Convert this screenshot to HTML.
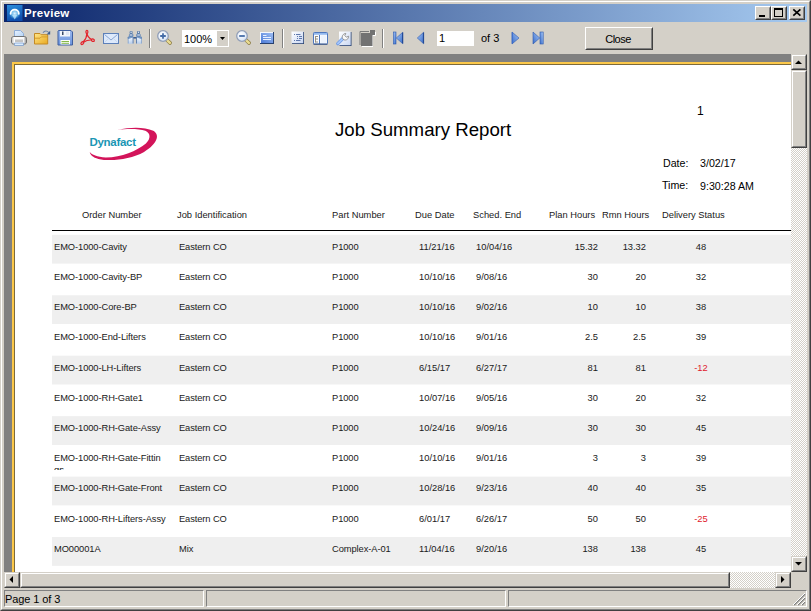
<!DOCTYPE html>
<html><head><meta charset="utf-8"><title>Preview</title>
<style>
*{box-sizing:border-box;margin:0;padding:0}
html,body{width:811px;height:611px;overflow:hidden;background:#d4d0c8}
body{position:relative;font-family:"Liberation Sans",sans-serif;font-size:11px;color:#000}
.abs,.abs *{position:absolute}
#win{left:0;top:0;width:811px;height:611px;background:#d4d0c8;
 border:1px solid;border-color:#d4d0c8 #404040 #404040 #d4d0c8}
#win2{left:0;top:0;width:809px;height:609px;border:1px solid;border-color:#fff #808080 #808080 #fff}
#title{left:4px;top:4px;width:803px;height:18px;background:linear-gradient(90deg,#0a246a 0%,#a6caf0 100%)}
#title .txt{left:20px;top:1px;color:#fff;font-weight:bold;font-size:11.5px;letter-spacing:0.3px;line-height:16px;white-space:nowrap}
.cap{top:2px;width:16px;height:14px;background:#d4d0c8;border:1px solid;border-color:#fff #404040 #404040 #fff}
.cap:before{content:"";position:absolute;left:0;top:0;right:0;bottom:0;border:1px solid;border-color:#d4d0c8 #808080 #808080 #d4d0c8}
#doc{left:4px;top:54px;width:787px;height:518px;background:#808080;overflow:hidden}
#page{left:8px;top:8px;width:900px;height:900px;background:#fff;border:2px solid #fcc84a}
#pin{left:0;top:0;width:896px;height:896px;border:1px solid #7d6a3a;border-right:0;border-bottom:0}
.track{background:#e9e7e3;background-image:repeating-conic-gradient(#fff 0 25%,#d4d0c8 0 50%);background-size:2px 2px}
.btn{background:#d4d0c8;border:1px solid;border-color:#d4d0c8 #404040 #404040 #d4d0c8}
.btn:before{content:"";position:absolute;left:0;top:0;right:0;bottom:0;border:1px solid;border-color:#fff #808080 #808080 #fff}
.pbtn{background:#d4d0c8;border:1px solid;border-color:#fff #404040 #404040 #fff}
.pbtn:before{content:"";position:absolute;left:0;top:0;right:0;bottom:0;border:1px solid;border-color:#d4d0c8 #808080 #808080 #d4d0c8}
.sunk{border:1px solid;border-color:#808080 #fff #fff #808080}
.sep{top:29px;width:2px;height:19px;border-left:1px solid #808080;border-right:1px solid #fff}
.r{font-size:9.33px;line-height:11px;white-space:nowrap}
.h{font-size:9.33px;line-height:11px;white-space:nowrap;top:210px;color:#1a1a1a}
.band{left:52px;width:740px;background:#efefef}
.row{left:0;width:800px;height:30px}
.row span{font-size:9.33px;line-height:11px;white-space:nowrap;top:0;color:#1a1a1a}
.c1{left:54px;letter-spacing:-0.08px}.c2{left:179px;letter-spacing:-0.1px}.c3{left:332px;letter-spacing:-0.08px}.c4{left:419px}.c5{left:476px}
.c6{left:540px;width:58px;text-align:right}.c7{left:588px;width:58px;text-align:right}.c8{left:671px;width:60px;text-align:center}
.row span.neg{color:#e0182c}
</style></head><body>
<div class="abs" id="win"><div id="win2"></div></div>
<div class="abs" id="title">
 <svg style="left:3px;top:1px" width="16" height="16" viewBox="0 0 16 16"><defs><linearGradient id="ig" x1="0" y1="0" x2="0.300" y2="1"><stop offset="0" stop-color="#2b8fdb"/><stop offset="1" stop-color="#0f4fae"/></linearGradient><radialGradient id="ir" cx="0.5" cy="0.5" r="0.5"><stop offset="0" stop-color="#dff3ff"/><stop offset="0.55" stop-color="#7cc8f2" stop-opacity=".8"/><stop offset="1" stop-color="#3aa0e0" stop-opacity="0"/></radialGradient></defs><rect width="15.500" height="16" fill="url(#ig)"/><circle cx="7.700" cy="8.500" r="5.800" fill="url(#ir)"/><path d="M3.600 8.800a4.100 4.100 0 0 1 8.200 0" fill="none" stroke="#fff" stroke-width="1.800" stroke-linecap="round"/><path d="M5.200 10L7.700 14.500L10.200 10z" fill="#bfe6fb" opacity=".75"/></svg>
 <div class="txt">Preview</div>
 <div class="cap" style="left:751px"><svg width="14" height="12" style="left:0;top:0"><rect x="3" y="8" width="6" height="2" fill="#000"/></svg></div>
 <div class="cap" style="left:767px"><svg width="14" height="12" style="left:0;top:0"><rect x="2.500" y="1.500" width="8" height="8" fill="none" stroke="#000"/><rect x="2" y="1" width="9" height="2" fill="#000"/></svg></div>
 <div class="cap" style="left:785px"><svg width="14" height="12" style="left:0;top:0"><path d="M3.300 2.400L10.400 8.600M10.400 2.400L3.300 8.600" stroke="#000" stroke-width="1.700" fill="none"/></svg></div>
</div>

<!-- TOOLBAR -->
<div class="abs" id="tb" style="left:0;top:0;width:811px;height:54px">
<!--ICONS_S--><svg style="left:0;top:0" width="811" height="54" viewBox="0 0 811 54">
<defs>
<linearGradient id="gfold" x1="0" y1="0" x2="1" y2="1"><stop offset="0" stop-color="#ffe68a"/><stop offset="1" stop-color="#e9a91f"/></linearGradient>
<linearGradient id="gprn" x1="0" y1="0" x2="1" y2="0"><stop offset="0" stop-color="#b8b8b8"/><stop offset=".2" stop-color="#ffffff"/><stop offset=".8" stop-color="#f4f4f4"/><stop offset="1" stop-color="#8a8a8a"/></linearGradient>
<linearGradient id="gpap" x1="0" y1="0" x2="1" y2="1"><stop offset="0" stop-color="#e6f1ff"/><stop offset="1" stop-color="#b5d3f5"/></linearGradient>
<linearGradient id="gsave" x1="0" y1="0" x2="0" y2="1"><stop offset="0" stop-color="#9bb9ee"/><stop offset="1" stop-color="#6b93dc"/></linearGradient>
<linearGradient id="gnav" x1="0" y1="0" x2="1" y2="1"><stop offset="0" stop-color="#a5c6f7"/><stop offset="1" stop-color="#3a6dc9"/></linearGradient>
<linearGradient id="gnavr" x1="1" y1="0" x2="0" y2="1"><stop offset="0" stop-color="#a5c6f7"/><stop offset="1" stop-color="#3a6dc9"/></linearGradient>
<linearGradient id="gscr" x1="0" y1="1" x2="1" y2="0"><stop offset="0" stop-color="#4b7ad6"/><stop offset="1" stop-color="#9dbdf3"/></linearGradient>
<linearGradient id="gdoc" x1="0" y1="0" x2="1" y2="1"><stop offset="0" stop-color="#ffffff"/><stop offset="1" stop-color="#c9d7f3"/></linearGradient>
<radialGradient id="glens" cx=".4" cy=".35" r=".7"><stop offset="0" stop-color="#ffffff"/><stop offset="1" stop-color="#d5e2f5"/></radialGradient>
<linearGradient id="gbin" x1="0" y1="0" x2="1" y2="0"><stop offset="0" stop-color="#5d86bb"/><stop offset=".45" stop-color="#e4eefb"/><stop offset="1" stop-color="#4f78ae"/></linearGradient>
<linearGradient id="gbin2" x1="0" y1="0" x2="0.250" y2="1"><stop offset="0" stop-color="#587eb0"/><stop offset=".3" stop-color="#7c9fcb"/><stop offset=".42" stop-color="#e6effb"/><stop offset="1" stop-color="#b9cfec"/></linearGradient>
</defs>
<!-- printer 11,30 -->
<g transform="translate(11,30)">
<path d="M3.500 7V0.500h6L12.500 3.500V7z" fill="url(#gpap)" stroke="#8fadd6"/>
<path d="M2.500 6.500h11c1.600 0 2 1.500 2 3v2.500c0 1.200-.6 2-2 2h-11c-1.400 0-2-.8-2-2V9.500c0-1.500.4-3 2-3z" fill="url(#gprn)" stroke="#666" stroke-width=".9"/>
<rect x="3.500" y="7" width="9" height="2.500" fill="#fafafa"/>
<rect x="4" y="9.500" width="8" height="2.500" fill="#c4c4c4"/>
<path d="M3.500 13h9v2.500h-9z" fill="#d9ecff" stroke="#7f9fcb" stroke-width=".8"/>
</g>
<!-- open folder 34,30 -->
<g transform="translate(34,30)">
<path d="M0.500 14V3.500h5.500l1.200 1.200h6.500V14z" fill="url(#gfold)" stroke="#c48a25"/>
<path d="M1 8.200h5l1.300-1.300H13.500" fill="none" stroke="#d69c2c" stroke-width="1"/>
<path d="M9 2.800C10.500 .6 13 .4 14.800 2.600" fill="none" stroke="#6f86a8" stroke-width="1.100"/>
<path d="M16.200 .8V4.600H12.600z" fill="#3e5f93"/>
</g>
<!-- save 57,30 -->
<g transform="translate(57,30)">
<path d="M1.500 .5h12.500L15.500 2v13h-14.500V1z" fill="url(#gsave)" stroke="#3f5f9f"/>
<rect x="3" y="1" width="10" height="5.500" fill="#f2f5fb"/>
<rect x="5" y="1.500" width="1.500" height="3.500" fill="#3a4a66"/>
<rect x="9" y="1.500" width="3" height="3.500" fill="#dfe6f2"/>
<rect x="3.500" y="10" width="9.500" height="4.500" fill="#fcfdf8"/>
<rect x="4.500" y="11" width="7.500" height="1" fill="#85b84a"/>
<rect x="4.500" y="12.800" width="7.500" height="1" fill="#85b84a"/>
</g>
<!-- pdf 80,30 -->
<g transform="translate(80,30)" fill="none" stroke="#e3242c" stroke-width="1.200" stroke-linecap="round">
<ellipse cx="6.900" cy="1.900" rx="1" ry="1.500"/>
<path d="M6.900 3.400C6.900 7 4.600 10.400 3.200 12"/>
<path d="M6.900 3.400C7.500 6.500 10 8.700 11.500 9.500"/>
<path d="M3.500 12.300C6 10.600 9 9.900 11.400 10"/>
<ellipse cx="2.300" cy="13.100" rx="1.600" ry="1.100" transform="rotate(-40 2.300 13.100)"/>
<ellipse cx="12.900" cy="10.200" rx="1.500" ry="1.200" transform="rotate(20 12.900 10.200)"/>
</g>
<!-- mail 103,33 -->
<g transform="translate(103,33)">
<rect x=".5" y=".5" width="15" height="10" fill="#dde9fb" stroke="#5d80b9"/>
<path d="M1.500 1.500L8 7L14.500 1.500" fill="none" stroke="#8aa6d3" stroke-width="1"/>
<path d="M1.500 9.500L5.500 5.500M14.500 9.500L10.500 5.500" fill="none" stroke="#c3d4ee" stroke-width=".8"/>
</g>
<!-- binoculars 127,31 -->
<g transform="translate(127,31)">
<g id="brl">
<rect x="2.600" y="0" width="3" height="3.200" rx="1" fill="#5b7da8"/>
<circle cx="4.100" cy="1.300" r=".7" fill="#eef4fc"/>
<rect x="1.900" y="2.900" width="4.500" height="3" rx=".8" fill="#6487b6"/>
<path d="M2.700 4h2.600" stroke="#f2f7fe" stroke-width=".9"/>
<rect x=".8" y="5.400" width="5.600" height="7.400" rx=".8" fill="url(#gbin2)"/>
<path d="M6.100 6v6.500" stroke="#4a6c9e" stroke-width=".8"/>
<path d="M1.200 6v6.500" stroke="#5f83b4" stroke-width=".6"/>
</g>
<use href="#brl" transform="translate(15.600,0) scale(-1,1)"/>
<rect x="6.400" y="6" width="2.800" height="1.600" fill="#3e5f92"/>
</g>
<!-- zoom + 157,30 -->
<g transform="translate(157,30)">
<path d="M10 10L13 12.900" stroke="#8d7d45" stroke-width="3.800" stroke-linecap="round"/>
<path d="M10.300 10.300L12.900 12.800" stroke="#eadc92" stroke-width="2.400" stroke-linecap="round"/>
<circle cx="6" cy="6" r="5.300" fill="url(#glens)" stroke="#929fb8" stroke-width="1.300"/>
<path d="M6 3.200v5.600M3.200 6h5.600" stroke="#466da8" stroke-width="1.800"/>
</g>
<!-- zoom - 236,30 -->
<g transform="translate(236,30)">
<path d="M10 10L13 12.900" stroke="#8d7d45" stroke-width="3.800" stroke-linecap="round"/>
<path d="M10.300 10.300L12.900 12.800" stroke="#eadc92" stroke-width="2.400" stroke-linecap="round"/>
<circle cx="6" cy="6" r="5.300" fill="url(#glens)" stroke="#929fb8" stroke-width="1.300"/>
<path d="M3.200 6h5.600" stroke="#466da8" stroke-width="1.800"/>
</g>
<!-- fullscreen 260,32 -->
<g transform="translate(260,32)">
<rect x="0" y="0" width="14" height="12" fill="#27406f"/>
<rect x="0" y="0" width="13" height="11" fill="#f4f7fd"/>
<rect x="1" y="1" width="12" height="10" fill="url(#gscr)"/>
<path d="M3 3.500h3.500M3 5.500h8M3 7.500h8" stroke="#e8f0ff" stroke-width="1"/>
</g>
<!-- outline 291,31 -->
<g transform="translate(291,31)">
<rect x="1" y="1" width="12" height="12" fill="#2b4473"/>
<rect x=".5" y=".5" width="11.700" height="11.700" fill="url(#gdoc)"/>
<path d="M3 3.500h1M5 3.500h4.500M6 5.500h1M8 5.500h3M6 7.500h1M8 7.500h3M3 9.500h1M5 9.500h4.500" stroke="#5f78ad" stroke-width="1"/>
</g>
<!-- thumbnails 313,32 -->
<g transform="translate(313,32)">
<rect x=".5" y=".5" width="14" height="11.500" rx=".8" fill="#fbfdff" stroke="#4f78be"/>
<rect x="1" y="1" width="13" height="1.800" fill="#93b9ee"/>
<path d="M6.500 3V12" stroke="#4f78be" stroke-width="1"/>
<rect x="7.500" y="3.200" width="6" height="8" fill="#edf3fc"/>
<path d="M2.500 4v6.500M2.500 4.500h2.500M2.500 7h2.500M2.500 10h2.500" stroke="#8d8779" stroke-width=".9" fill="none"/>
<path d="M.5 12.200H14.500" stroke="#2b4473" stroke-width=".9"/>
</g>
<!-- wrench 336,31 -->
<g transform="translate(336,31)">
<rect x="3.500" y="1" width="12" height="14" fill="#2b4473"/>
<rect x="3" y=".5" width="11.700" height="13.700" fill="url(#gdoc)"/>
<path d="M1.800 12.600L7 7.400" stroke="#6f9be6" stroke-width="3.400" stroke-linecap="round"/>
<path d="M2 12.400L7 7.400" stroke="#a4c5fa" stroke-width="2" stroke-linecap="round"/>
<path d="M6.600 7.600C5.500 5.500 7 2.600 9.800 2.400L8.800 4.600L10.400 6.200L12.600 5.200C12.800 8 10.200 9.600 8 8.800z" fill="#fafafa" stroke="#8a8a8a" stroke-width=".9"/>
</g>
<!-- disabled page 359,30 -->
<g transform="translate(359,30)">
<path d="M3 4h11v13H3z" fill="#fff"/>
<path d="M1 1.500h9M1 1.500V15" stroke="#7b7b7b" stroke-width="1" fill="none"/>
<path d="M2 3h9V0h5v5h-2.500v11H2z" fill="#727272"/>
<path d="M14 5.500h2.500V2" stroke="#fff" stroke-width="1" fill="none"/>
</g>
<!-- first 392,32 -->
<g transform="translate(392,32)">
<rect x="1.400" y="0" width="2.600" height="12" fill="url(#gnav)" stroke="#2d59ad" stroke-width=".6"/>
<path d="M4.300 6L10.800 .2V11.800z" fill="url(#gnav)" stroke="#2d59ad" stroke-width=".6"/>
<path d="M10.600 .7V11.300" stroke="#1f4590" stroke-width="1"/>
</g>
<!-- prev 417,32 -->
<g transform="translate(417,32)">
<path d="M.3 6L6.700 .2V11.800z" fill="url(#gnav)" stroke="#2d59ad" stroke-width=".6"/>
<path d="M6.400 .7V11.300" stroke="#1f4590" stroke-width="1"/>
</g>
<!-- next 512,32 -->
<g transform="translate(512,32)">
<path d="M7 6L0 0V12z" fill="url(#gnavr)" stroke="#2d59ad" stroke-width=".6"/>
<path d="M.3 .5V11.500" stroke="#3d6fcf" stroke-width="1"/>
</g>
<!-- last 533,32 -->
<g transform="translate(533,32)">
<path d="M6.700 6L0 0V12z" fill="url(#gnavr)" stroke="#2d59ad" stroke-width=".6"/>
<rect x="7" y="0" width="3.200" height="12" fill="url(#gnavr)" stroke="#2d59ad" stroke-width=".6"/>
</g>
</svg>
<!--ICONS_E-->
 <div class="sep" style="left:149px"></div>
 <div class="sep" style="left:282px"></div>
 <div class="sep" style="left:382px"></div>
 <div style="left:182px;top:30px;width:47px;height:17px;background:#fff"><div style="left:2px;top:3px;font-size:11px;line-height:13px;white-space:nowrap">100%</div>
   <div style="left:35px;top:1px;width:11px;height:15px;background:#d4d0c8"><svg width="11" height="15" style="left:0;top:0"><path d="M3 6h5L5.500 9z" fill="#000"/></svg></div></div>
 <div style="left:437px;top:31px;width:37px;height:15px;background:#fff"><div style="left:2px;top:1px;font-size:11px;line-height:13px">1</div></div>
 <div style="left:481px;top:32px;font-size:11px;line-height:13px;white-space:nowrap">of 3</div>
 <div class="pbtn" style="left:585px;top:27px;width:68px;height:23px"><div style="left:-1px;top:5px;width:66px;text-align:center;font-size:11px;line-height:13px;letter-spacing:-0.5px">Close</div></div>
</div>

<!-- DOC -->
<div class="abs" id="doc"><div id="page"><div id="pin"></div></div></div>
<div class="abs" id="rep" style="left:0;top:0;width:791px;height:572px;overflow:hidden">
<!--REPORT-->
<svg style="left:75px;top:115px" width="100" height="55" viewBox="0 0 811 446"><path d="M345 121C450 98 560 96 635 128C690 160 672 230 560 300C450 360 290 380 190 356C145 345 122 322 120 300C135 322 180 340 250 345C380 345 500 292 575 232C618 190 612 145 570 128C520 110 420 110 345 121Z" fill="#d3145a"/></svg>
<div style="left:89.500px;top:135px;font-size:11.5px;line-height:14px;font-weight:bold;color:#1b96b4;white-space:nowrap;letter-spacing:-0.3px">Dynafact</div>
<div style="left:335px;top:119px;font-size:18.67px;line-height:22px;white-space:nowrap">Job Summary Report</div>
<div style="left:697px;top:104px;font-size:12px;line-height:14px">1</div>
<div style="left:663px;top:157px;font-size:10.67px;line-height:13px;white-space:nowrap">Date:</div>
<div style="left:700px;top:157px;font-size:10.67px;line-height:13px;white-space:nowrap">3/02/17</div>
<div style="left:662px;top:179px;font-size:10.67px;line-height:13px;white-space:nowrap">Time:</div>
<div style="left:700px;top:180px;font-size:10.67px;line-height:13px;white-space:nowrap">9:30:28 AM</div>
<div class="h" style="left:82px">Order Number</div>
<div class="h" style="left:177px">Job Identification</div>
<div class="h" style="left:332px">Part Number</div>
<div class="h" style="left:415px">Due Date</div>
<div class="h" style="left:473px">Sched. End</div>
<div class="h" style="left:549px">Plan Hours</div>
<div class="h" style="left:602px">Rmn Hours</div>
<div class="h" style="left:662px">Delivery Status</div>
<div style="left:52px;top:230px;width:740px;height:1px;background:#000"></div>
<svg style="left:0;top:0" width="791" height="572"><rect x="52" y="234.80" width="740" height="28.8" fill="#efefef"/><rect x="52" y="295.25" width="740" height="28.8" fill="#efefef"/><rect x="52" y="355.70" width="740" height="28.8" fill="#efefef"/><rect x="52" y="416.15" width="740" height="28.8" fill="#efefef"/><rect x="52" y="476.60" width="740" height="28.8" fill="#efefef"/><rect x="52" y="537.05" width="740" height="28.8" fill="#efefef"/></svg>
<div class="row" style="top:242px"><span class="c1">EMO-1000-Cavity</span><span class="c2">Eastern CO</span><span class="c3">P1000</span><span class="c4">11/21/16</span><span class="c5">10/04/16</span><span class="c6">15.32</span><span class="c7">13.32</span><span class="c8">48</span></div>
<div class="row" style="top:272px"><span class="c1">EMO-1000-Cavity-BP</span><span class="c2">Eastern CO</span><span class="c3">P1000</span><span class="c4">10/10/16</span><span class="c5">9/08/16</span><span class="c6">30</span><span class="c7">20</span><span class="c8">32</span></div>
<div class="row" style="top:302px"><span class="c1">EMO-1000-Core-BP</span><span class="c2">Eastern CO</span><span class="c3">P1000</span><span class="c4">10/10/16</span><span class="c5">9/02/16</span><span class="c6">10</span><span class="c7">10</span><span class="c8">38</span></div>
<div class="row" style="top:332px"><span class="c1">EMO-1000-End-Lifters</span><span class="c2">Eastern CO</span><span class="c3">P1000</span><span class="c4">10/10/16</span><span class="c5">9/01/16</span><span class="c6">2.5</span><span class="c7">2.5</span><span class="c8">39</span></div>
<div class="row" style="top:363px"><span class="c1">EMO-1000-LH-Lifters</span><span class="c2">Eastern CO</span><span class="c3">P1000</span><span class="c4">6/15/17</span><span class="c5">6/27/17</span><span class="c6">81</span><span class="c7">81</span><span class="c8 neg">-12</span></div>
<div class="row" style="top:393px"><span class="c1">EMO-1000-RH-Gate1</span><span class="c2">Eastern CO</span><span class="c3">P1000</span><span class="c4">10/07/16</span><span class="c5">9/05/16</span><span class="c6">30</span><span class="c7">20</span><span class="c8">32</span></div>
<div class="row" style="top:423px"><span class="c1">EMO-1000-RH-Gate-Assy</span><span class="c2">Eastern CO</span><span class="c3">P1000</span><span class="c4">10/24/16</span><span class="c5">9/09/16</span><span class="c6">30</span><span class="c7">30</span><span class="c8">45</span></div>
<div class="row" style="top:453px"><span class="c1">EMO-1000-RH-Gate-Fittin</span><span class="c2">Eastern CO</span><span class="c3">P1000</span><span class="c4">10/10/16</span><span class="c5">9/01/16</span><span class="c6">3</span><span class="c7">3</span><span class="c8">39</span></div>
<div class="row" style="top:483px"><span class="c1">EMO-1000-RH-Gate-Front</span><span class="c2">Eastern CO</span><span class="c3">P1000</span><span class="c4">10/28/16</span><span class="c5">9/23/16</span><span class="c6">40</span><span class="c7">40</span><span class="c8">35</span></div>
<div class="row" style="top:514px"><span class="c1">EMO-1000-RH-Lifters-Assy</span><span class="c2">Eastern CO</span><span class="c3">P1000</span><span class="c4">6/01/17</span><span class="c5">6/26/17</span><span class="c6">50</span><span class="c7">50</span><span class="c8 neg">-25</span></div>
<div class="row" style="top:544px"><span class="c1">MO00001A</span><span class="c2">Mix</span><span class="c3">Complex-A-01</span><span class="c4">11/04/16</span><span class="c5">9/20/16</span><span class="c6">138</span><span class="c7">138</span><span class="c8">45</span></div>
<div style="left:54px;top:465px;width:40px;height:5px;overflow:hidden"><span class="r" style="left:0;top:0">gs</span></div>
</div>

<!-- SCROLLBARS -->
<div class="abs track" style="left:791px;top:54px;width:16px;height:518px">
 <div class="btn" style="left:0;top:0;width:16px;height:16px"><svg width="16" height="16" style="left:-1px;top:-1px"><path d="M4 10h7L7.500 6.500z" fill="#000"/></svg></div>
 <div class="btn" style="left:0;top:16px;width:16px;height:78px"></div>
 <div class="btn" style="left:0;top:502px;width:16px;height:16px"><svg width="16" height="16" style="left:-1px;top:-1px"><path d="M4 6h7L7.500 9.500z" fill="#000"/></svg></div>
</div>
<div class="abs track" style="left:4px;top:572px;width:787px;height:16px">
 <div class="btn" style="left:0;top:0;width:16px;height:16px"><svg width="16" height="16" style="left:-1px;top:-1px"><path d="M9 4v7L5.500 7.500z" fill="#000"/></svg></div>
 <div class="btn" style="left:16px;top:0;width:710px;height:16px"></div>
 <div class="btn" style="left:771px;top:0;width:16px;height:16px"><svg width="16" height="16" style="left:-1px;top:-1px"><path d="M6 4v7L9.500 7.500z" fill="#000"/></svg></div>
</div>

<!-- STATUS -->
<div class="abs" style="left:0;top:588px;width:811px;height:19px">
 <div class="sunk" style="left:4px;top:2px;width:200px;height:17px"><div style="left:0px;top:2px;font-size:11px;line-height:13px;white-space:nowrap;letter-spacing:-0.1px">Page 1 of 3</div></div>
 <div class="sunk" style="left:206px;top:2px;width:300px;height:17px"></div>
 <div class="sunk" style="left:508px;top:2px;width:299px;height:17px"></div>
 <svg style="left:793px;top:5px" width="13" height="13"><path d="M12 1L1 12M12 5L5 12M12 9L9 12" stroke="#808080" stroke-width="1.4"/><path d="M12 0L0 12M12 4L4 12M12 8L8 12" stroke="#fff" stroke-width="1"/></svg>
</div>
</body></html>
